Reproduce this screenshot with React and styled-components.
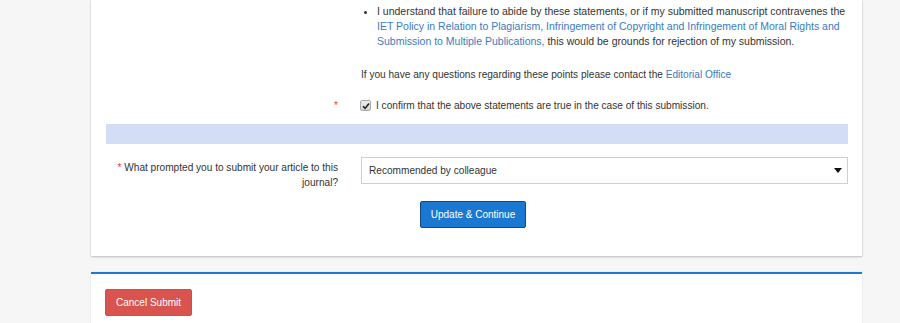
import React from "react";
import styled, { createGlobalStyle } from "styled-components";

const GlobalStyle = createGlobalStyle`
  html, body { margin: 0; padding: 0; }
  body {
    background: #f6f6f6;
    font-family: "Liberation Sans", Arial, sans-serif;
    font-size: 10.1px;
    color: #333;
    overflow: hidden;
  }
`;

const Page = styled.div`
  width: 771px;
  margin-left: 91px;
`;

const Panel = styled.div`
  background: #fff;
  box-shadow: 0 1px 2px rgba(0, 0, 0, 0.22), 0 0 1px rgba(0, 0, 0, 0.12);
  padding: 4px 14px 28px 15px;
`;

const FooterPanel = styled.div`
  margin-top: 16px;
  background: #fff;
  border-top: 2px solid #1c7ad6;
  box-shadow: 0 0 1px rgba(0, 0, 0, 0.18);
  padding: 15px 14px 30px;
`;

const Field = styled.div`
  margin-left: 255px;
  line-height: 15px;
`;

const BulletList = styled.ul`
  margin: 0;
  padding-left: 16px;
  line-height: 15px;
  font-size: 10.5px;
`;

const Link = styled.a`
  color: #3a7bc0;
  text-decoration: none;
`;

const Note = styled(Field)`
  margin-top: 18px;
`;

const FormRow = styled.div`
  display: grid;
  grid-template-columns: 232px 1fr;
  column-gap: 23px;
  margin-top: ${(p) => p.$top || 0}px;
  line-height: 15px;
`;

const Label = styled.div`
  text-align: right;
  padding-top: ${(p) => p.$pad || 0}px;
`;

const Required = styled.span`
  color: #e0443f;
`;

const CheckLine = styled.label`
  display: flex;
  align-items: center;
  gap: 5px;
  margin-left: -1px;
`;

const CheckBox = styled.span`
  width: 9px;
  height: 9px;
  border: 1px solid #a9a9a9;
  border-radius: 2px;
  background: linear-gradient(#ededed, #d6d6d6);
  display: inline-flex;
  align-items: center;
  justify-content: center;
`;

const Band = styled.div`
  margin-top: 11px;
  height: 20px;
  background: #d3ddf5;
`;

const SelectBox = styled.div`
  height: 25px;
  border: 1px solid #cfcfcf;
  display: flex;
  align-items: center;
  justify-content: space-between;
  padding: 0 5px 0 7px;
  color: #333;
`;

const Caret = styled.span`
  width: 0;
  height: 0;
  border-left: 4px solid transparent;
  border-right: 4px solid transparent;
  border-top: 5px solid #111;
`;

const ButtonRow = styled.div`
  display: flex;
  justify-content: center;
  padding-right: 8px;
  margin-top: 11px;
`;

const Button = styled.button`
  font-family: "Liberation Sans", Arial, sans-serif;
  font-size: 10px;
  height: 27px;
  box-sizing: border-box;
  padding: 0 ${(p) => p.$px}px;
  border-radius: 2px;
  color: #fff;
  cursor: pointer;
  background: ${(p) => (p.$variant === "danger" ? "#d9534f" : "#1a78d2")};
  border: 1px solid ${(p) => (p.$variant === "danger" ? "#d84b47" : "#16497e")};
`;

export default function App() {
  return (
    <>
      <GlobalStyle />
      <Page>
        <Panel>
          <Field>
            <BulletList>
              <li>
                I understand that failure to abide by these statements, or if my submitted manuscript contravenes the{" "}
                <Link href="#">
                  IET Policy in Relation to Plagiarism, Infringement of Copyright and Infringement of Moral Rights and
                  Submission to Multiple Publications,
                </Link>{" "}
                this would be grounds for rejection of my submission.
              </li>
            </BulletList>
          </Field>
          <Note>
            If you have any questions regarding these points please contact the <Link href="#">Editorial Office</Link>
          </Note>
          <FormRow $top={16}>
            <Label>
              <Required>*</Required>
            </Label>
            <CheckLine>
              <CheckBox>
                <svg width="8" height="8" viewBox="0 0 8 8">
                  <path d="M1 4.2 L3.1 6.4 L7 1.4" fill="none" stroke="#222" strokeWidth="1.6" />
                </svg>
              </CheckBox>
              I confirm that the above statements are true in the case of this submission.
            </CheckLine>
          </FormRow>
          <Band />
          <FormRow $top={13}>
            <Label $pad={3}>
              <Required>*</Required> What prompted you to submit your article to this journal?
            </Label>
            <SelectBox>
              <span>Recommended by colleague</span>
              <Caret />
            </SelectBox>
          </FormRow>
          <ButtonRow>
            <Button $px={10}>Update &amp; Continue</Button>
          </ButtonRow>
        </Panel>
        <FooterPanel>
          <Button $variant="danger" $px={10}>Cancel Submit</Button>
        </FooterPanel>
      </Page>
    </>
  );
}
